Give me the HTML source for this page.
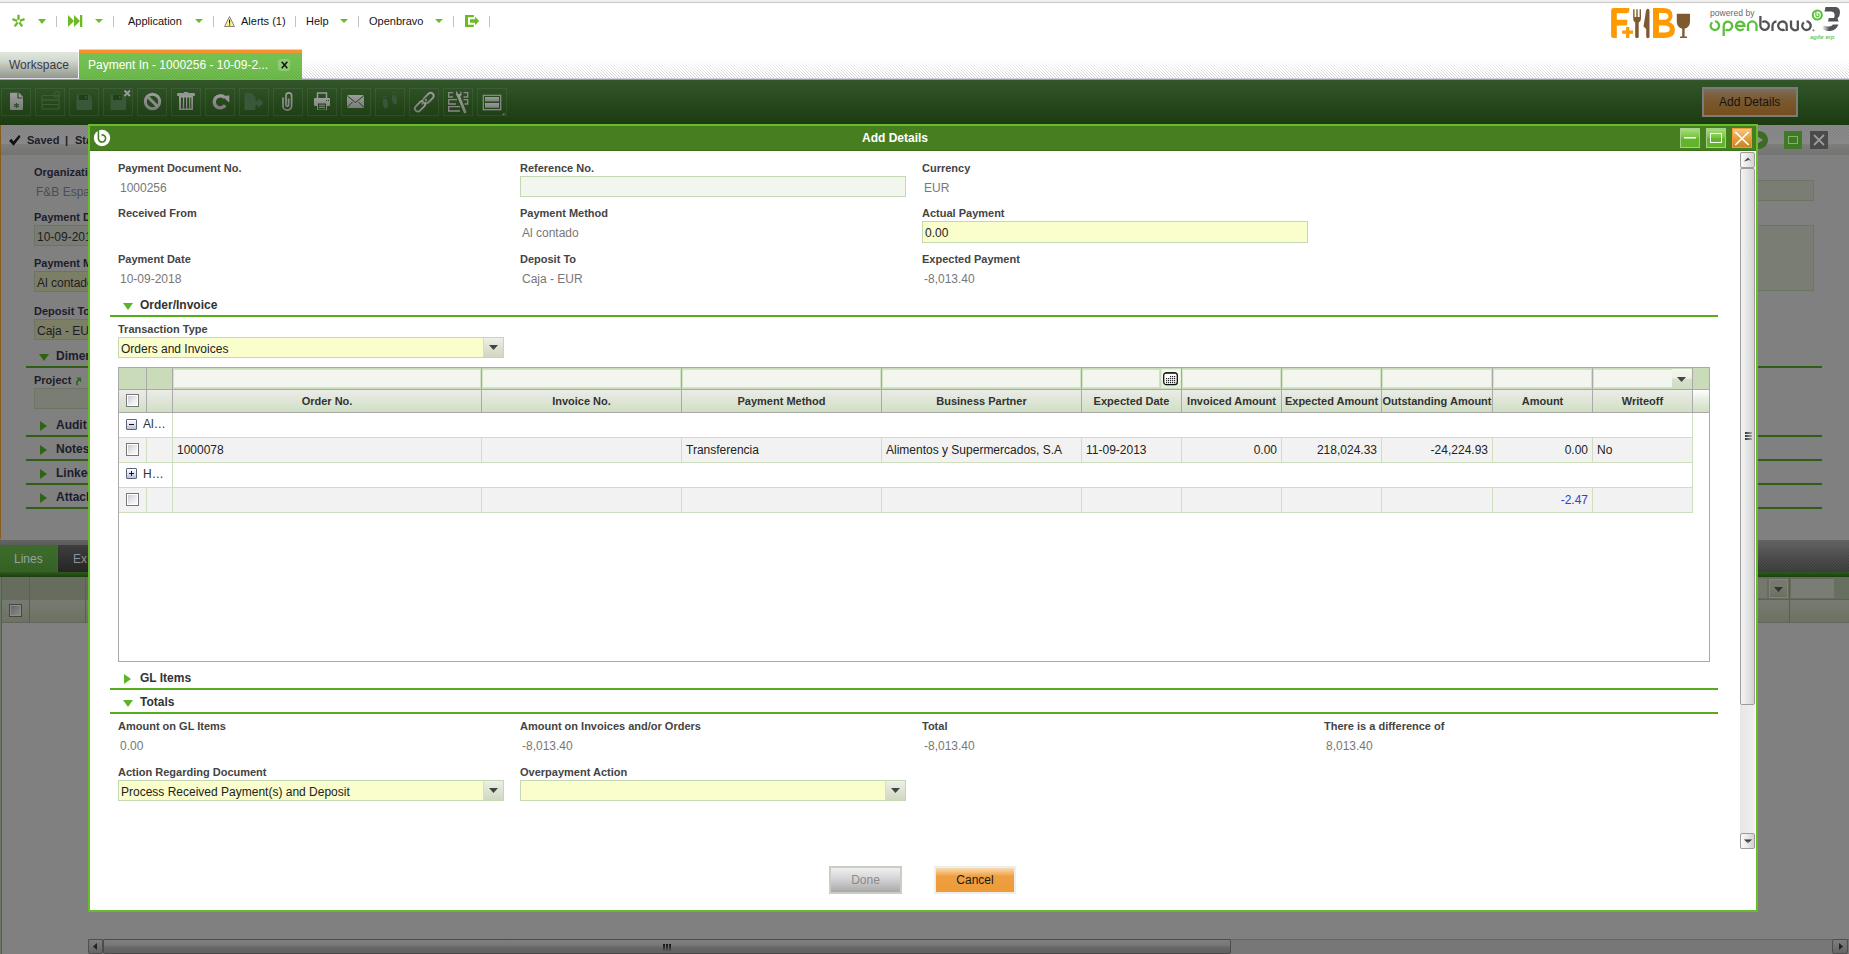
<!DOCTYPE html>
<html><head><meta charset="utf-8">
<style>
*{box-sizing:border-box;margin:0;padding:0}
html,body{width:1849px;height:954px;overflow:hidden;background:#fff;font-family:"Liberation Sans",sans-serif;position:relative}
.a{position:absolute}
.t{position:absolute;white-space:nowrap;line-height:14px}
.b11{font-size:11px;font-weight:bold}
.b12{font-size:12px;font-weight:bold}
.r12{font-size:12px}
.r11{font-size:11px}
svg{position:absolute;overflow:visible}
</style></head><body>

<div class="a" style="left:0px;top:0px;width:1849px;height:2px;background:#efeeec"></div>
<div class="a" style="left:0px;top:2px;width:1849px;height:1px;background:#c9c9c9"></div>
<svg style="left:11px;top:14px" width="15" height="14" viewBox="0 0 15 14"><g stroke="#6cbb25" stroke-width="2.4"><line x1="7.50" y1="5.80" x2="7.50" y2="0.80"/><line x1="8.83" y1="6.77" x2="13.59" y2="5.22"/><line x1="8.32" y1="8.33" x2="11.26" y2="12.38"/><line x1="6.68" y1="8.33" x2="3.74" y2="12.38"/><line x1="6.17" y1="6.77" x2="1.41" y2="5.22"/></g></svg>
<svg style="left:38px;top:19px" width="8" height="5" viewBox="0 0 8 5"><polygon points="0,0 8,0 4.0,5" fill="#6cbb25"/></svg>
<div class="a" style="left:56px;top:16px;width:1px;height:11px;background:#c2c2c2"></div>
<svg style="left:68px;top:15px" width="15" height="12" viewBox="0 0 15 12">
<polygon points="0,0 6,6 0,12" fill="#6cbb25"/><polygon points="6,0 12,6 6,12" fill="#6cbb25"/><rect x="12" y="0" width="2.3" height="12" fill="#6cbb25"/></svg>
<svg style="left:95px;top:19px" width="8" height="4" viewBox="0 0 8 4"><polygon points="0,0 8,0 4.0,4" fill="#6cbb25"/></svg>
<div class="a" style="left:113px;top:16px;width:1px;height:11px;background:#c2c2c2"></div>
<div class="t r11" style="left:128px;top:14px;color:#141420">Application</div>
<svg style="left:195px;top:19px" width="8" height="4" viewBox="0 0 8 4"><polygon points="0,0 8,0 4.0,4" fill="#6cbb25"/></svg>
<div class="a" style="left:213px;top:16px;width:1px;height:11px;background:#c2c2c2"></div>
<svg style="left:224px;top:16px" width="11" height="11" viewBox="0 0 11 11">
<polygon points="5.5,0.5 10.5,10.5 0.5,10.5" fill="#fbf08a" stroke="#777" stroke-width="0.9"/>
<rect x="5" y="3.6" width="1.1" height="4" fill="#222"/><rect x="5" y="8.4" width="1.1" height="1.1" fill="#222"/></svg>
<div class="t r11" style="left:241px;top:14px;color:#141420">Alerts (1)</div>
<div class="a" style="left:295px;top:16px;width:1px;height:11px;background:#c2c2c2"></div>
<div class="t r11" style="left:306px;top:14px;color:#141420">Help</div>
<svg style="left:340px;top:19px" width="8" height="4" viewBox="0 0 8 4"><polygon points="0,0 8,0 4.0,4" fill="#6cbb25"/></svg>
<div class="a" style="left:358px;top:16px;width:1px;height:11px;background:#c2c2c2"></div>
<div class="t r11" style="left:369px;top:14px;color:#141420">Openbravo</div>
<svg style="left:435px;top:19px" width="8" height="4" viewBox="0 0 8 4"><polygon points="0,0 8,0 4.0,4" fill="#6cbb25"/></svg>
<div class="a" style="left:453px;top:16px;width:1px;height:11px;background:#c2c2c2"></div>
<svg style="left:465px;top:15px" width="15" height="12" viewBox="0 0 15 12">
<path d="M0,0 H8.8 V2.2 H3 V9.8 H8.8 V12 H0 Z" fill="#6cbb25"/>
<polygon points="5,4.2 10,4.2 10,1.8 14.2,6 10,10.2 10,7.8 5,7.8" fill="#6cbb25"/></svg>
<div class="a" style="left:489px;top:16px;width:1px;height:11px;background:#c2c2c2"></div>
<svg style="left:1610px;top:7px" width="82" height="32" viewBox="0 0 82 32">
<path d="M1.1,3.5 Q1.1,1.1 3.6,1.1 H19.3 V3.8 Q19.3,6.2 16.8,6.2 H6.8 V12.7 H17.3 V15.9 Q17.3,18.4 14.8,18.4 H6.8 V31 H3.6 Q1.1,31 1.1,28.5 Z" fill="#ff9a00"/>
<path d="M12.2,25.2 H23 M17.7,20 V31" stroke="#ff9a00" stroke-width="3.3" fill="none"/>
<path d="M23.2,2.2 H24.6 V10 H26.3 V2.2 H27.7 V10 H29.6 V2.2 H31 V11.5 Q31,14.5 28.7,15.5 V29.5 Q28.7,31.2 27,31.2 Q25.2,31.2 25.2,29.5 V15.5 Q23.2,14.5 23.2,11.5 Z" fill="#7f5a2f"/>
<path d="M33.5,19.5 L36,3.8 Q36.5,1.8 37.8,1.8 Q39.5,1.8 39.5,4.2 V29.8 Q39.5,31.2 37.8,31.2 Q36.2,31.2 36.2,29.8 V22 Z" fill="#7f5a2f"/>
<path d="M43,1.1 H53 Q62.5,1.1 62.5,8.5 Q62.5,12.5 59,15 Q64.9,17 64.9,23 Q64.9,31 54,31 H43 Z M49,6 V12.7 H54 Q58.4,12.7 58.4,9.3 Q58.4,6 54,6 Z M49,18.4 V25.4 H54.5 Q59.8,25.4 59.8,21.9 Q59.8,18.4 54.5,18.4 Z" fill="#ff9a00" fill-rule="evenodd"/>
<path d="M66.8,6.8 H80 V14.5 Q80,20.5 74.6,21.7 V29.5 H77 V31 H70 V29.5 H72.2 V21.7 Q66.8,20.5 66.8,14.5 Z" fill="#7f5a2f"/>
</svg>
<svg style="left:0;top:0" width="1849" height="45" viewBox="0 0 1849 45">
<text x="1710" y="15.6" font-family="Liberation Sans" font-size="8.6" fill="#6a6a6a" textLength="44.5" lengthAdjust="spacingAndGlyphs">powered by</text>
<g fill="none" stroke="#5cbf3c" stroke-width="2.3">
<path d="M1712.3,22.3 A4.25,4.25 0 1 0 1714.9,21.45"/>
<path d="M1723.7,36 V25.7 A4.25,4.25 0 1 1 1725.6,29.5"/>
<path d="M1736.1,25.8 H1744.5 A4.25,4.25 0 1 0 1743.6,28.6"/>
<path d="M1748,31 V25.7 A4.25,4.25 0 0 1 1756.5,25.7 V31"/>
</g>
<g fill="none" stroke="#525356" stroke-width="2.3">
<path d="M1760.4,16 V25.7 A4.25,4.25 0 1 0 1762.3,22.1"/>
<path d="M1772.5,31 V25.7 A4.25,4.25 0 0 1 1776.5,21.5"/>
<path d="M1786.7,31 V25.7 A4.25,4.25 0 1 0 1784.6,29.4"/>
<path d="M1791,20.4 V26.5 A4.25,4.25 0 0 0 1797.8,29.4 V20.4" />
<path d="M1803.9,22.3 A4.25,4.25 0 1 0 1806.5,21.45"/>
</g>
<circle cx="1813.5" cy="30.3" r="1.1" fill="#888"/>
<circle cx="1817.3" cy="15" r="4.5" fill="none" stroke="#5cbf3c" stroke-width="2.1"/>
<path d="M1815.9,11.2 V15.3 A1.6,1.6 0 1 0 1817.5,13.7" fill="none" stroke="#5cbf3c" stroke-width="1.2"/>
<defs><linearGradient id="g3" x1="0" y1="0" x2="1" y2="0"><stop offset="0" stop-color="#fff"/><stop offset="0.45" stop-color="#525356"/></linearGradient></defs>
<path d="M1825.5,7 H1835 Q1840,7 1840,12.5 Q1840,16 1837.5,18.5 L1838.6,21.5 H1828 L1828.8,18 H1834 Q1835,16 1834.5,14 Q1834,11.5 1831.5,11.5 H1824.5 Z" fill="#525356"/>
<path d="M1822,28.2 Q1824,31 1830,31 Q1836,31 1838.5,24.5 H1833 Q1831.5,26.5 1829,26.5 Q1826,26.5 1823.5,25.5 Z" fill="url(#g3)"/>
<text x="1810" y="38.5" font-family="Liberation Sans" font-size="6" font-style="italic" font-weight="bold" fill="#6fc95a" textLength="24.5" lengthAdjust="spacingAndGlyphs">agile erp</text>
</svg>
<div class="a" style="left:302px;top:49px;width:1547px;height:30px;background:#fff"></div>
<svg style="left:302px;top:58px" width="1547" height="20"><defs><pattern id="hp1" x="1" y="2" width="3" height="3" patternUnits="userSpaceOnUse"><rect x="0" y="0" width="1" height="1" fill="#c4c4c4"/><rect x="1" y="1" width="1" height="1" fill="#c4c4c4"/><rect x="2" y="2" width="1" height="1" fill="#c4c4c4"/></pattern></defs><rect width="1547" height="20" fill="url(#hp1)" opacity="1.0"/><rect width="1547" height="20" fill="url(#oghp1)"/><defs><linearGradient id="oghp1" x1="0" y1="0" x2="0" y2="1"><stop offset="0" stop-color="#fff" stop-opacity="1"/><stop offset="0.25" stop-color="#fff" stop-opacity="0.85"/><stop offset="1" stop-color="#fff" stop-opacity="0.15"/></linearGradient></defs></svg>
<div class="a" style="left:302px;top:78px;width:1547px;height:1px;background:#d2cde0"></div>
<div class="a" style="left:0px;top:52px;width:79px;height:27px;background:linear-gradient(#e0e6dc,#d3dad0 30%,#92968d);border-right:1px solid #f2f2f2;border-bottom:1px solid #dcdce4"></div>
<div class="t r12" style="left:9px;top:58px;color:#3a3a48">Workspace</div>
<div class="a" style="left:79px;top:49px;width:223px;height:1px;background:#fbcf9f"></div>
<div class="a" style="left:79px;top:50px;width:223px;height:3px;background:#f7932f"></div>
<div class="a" style="left:79px;top:53px;width:223px;height:26px;background:linear-gradient(#6cc04f,#77c255 20%,#6cb648 100%)"></div>
<svg style="left:79px;top:53px" width="223" height="26"><defs><pattern id="hp2" x="2" y="1" width="3" height="3" patternUnits="userSpaceOnUse"><rect x="0" y="0" width="1" height="1" fill="#4f9a35"/><rect x="1" y="1" width="1" height="1" fill="#4f9a35"/><rect x="2" y="2" width="1" height="1" fill="#4f9a35"/></pattern></defs><rect width="223" height="26" fill="url(#hp2)" opacity="1.0"/><rect width="223" height="26" fill="url(#oghp2)"/><defs><linearGradient id="oghp2" x1="0" y1="0" x2="0" y2="1"><stop offset="0" stop-color="#74c153" stop-opacity="1"/><stop offset="0.3" stop-color="#74c153" stop-opacity="0.9"/><stop offset="1" stop-color="#74c153" stop-opacity="0.4"/></linearGradient></defs></svg>
<div class="t r12" style="left:88px;top:58px;color:#fff">Payment In - 1000256 - 10-09-2...</div>
<div class="a" style="left:278px;top:59px;width:12px;height:12px;background:rgba(255,255,255,0.22);border-radius:3px"></div>
<svg style="left:281px;top:61px" width="7" height="8" viewBox="0 0 7 8"><path d="M0.7,0.8 L6.3,7.2 M6.3,0.8 L0.7,7.2" stroke="#111" stroke-width="1.5"/></svg>
<div class="a" style="left:0px;top:79px;width:1849px;height:1px;background:#6cc232"></div>
<div class="a" style="left:0px;top:80px;width:1849px;height:874px;background:#808080"></div>
<div class="a" style="left:0px;top:80px;width:1849px;height:45px;background:linear-gradient(#32562a,#1b3a10)"></div>
<div class="a" style="left:1px;top:88px;width:30px;height:28px;border:1px solid rgba(255,255,255,0.07)"></div>
<div class="a" style="left:35px;top:88px;width:30px;height:28px;border:1px solid rgba(255,255,255,0.07)"></div>
<div class="a" style="left:69px;top:88px;width:30px;height:28px;border:1px solid rgba(255,255,255,0.07)"></div>
<div class="a" style="left:103px;top:88px;width:30px;height:28px;border:1px solid rgba(255,255,255,0.07)"></div>
<div class="a" style="left:137px;top:88px;width:30px;height:28px;border:1px solid rgba(255,255,255,0.07)"></div>
<div class="a" style="left:171px;top:88px;width:30px;height:28px;border:1px solid rgba(255,255,255,0.07)"></div>
<div class="a" style="left:205px;top:88px;width:30px;height:28px;border:1px solid rgba(255,255,255,0.07)"></div>
<div class="a" style="left:239px;top:88px;width:30px;height:28px;border:1px solid rgba(255,255,255,0.07)"></div>
<div class="a" style="left:273px;top:88px;width:30px;height:28px;border:1px solid rgba(255,255,255,0.07)"></div>
<div class="a" style="left:307px;top:88px;width:30px;height:28px;border:1px solid rgba(255,255,255,0.07)"></div>
<div class="a" style="left:341px;top:88px;width:30px;height:28px;border:1px solid rgba(255,255,255,0.07)"></div>
<div class="a" style="left:375px;top:88px;width:30px;height:28px;border:1px solid rgba(255,255,255,0.07)"></div>
<div class="a" style="left:409px;top:88px;width:30px;height:28px;border:1px solid rgba(255,255,255,0.07)"></div>
<div class="a" style="left:443px;top:88px;width:30px;height:28px;border:1px solid rgba(255,255,255,0.07)"></div>
<div class="a" style="left:477px;top:88px;width:30px;height:28px;border:1px solid rgba(255,255,255,0.07)"></div>
<svg style="left:0;top:0" width="0" height="0"><defs><linearGradient id="icg" x1="0" y1="0" x2="0" y2="1"><stop offset="0" stop-color="#9c9c9c"/><stop offset="1" stop-color="#7c7c7c"/></linearGradient></defs></svg>
<svg style="left:1px;top:88px" width="30" height="28" viewBox="0 0 30 28"><path d="M9.5,4.7 H18 L22,8.7 V21.2 Q22,22 21,22 H10 Q9,22 9,21 V5.5 Q9,4.7 9.5,4.7 Z" fill="url(#icg)"/><path d="M17,5 V10 H21.5" stroke="#2a4d20" stroke-width="1.2" fill="none"/><g stroke="#2a4d20" stroke-width="1.1"><line x1="15.5" y1="15" x2="15.5" y2="20"/><line x1="13" y1="16.2" x2="18" y2="18.8"/><line x1="13" y1="18.8" x2="18" y2="16.2"/></g></svg>
<svg style="left:35px;top:88px" width="30" height="28" viewBox="0 0 30 28"><g stroke="#3b5e33" stroke-width="1.2" fill="none"><rect x="7" y="7.5" width="17" height="4.5" rx="1"/><rect x="7" y="12" width="17" height="4.5" rx="1"/><rect x="7" y="16.5" width="17" height="4.5" rx="1"/><circle cx="22" cy="6.5" r="2.8"/></g></svg>
<svg style="left:69px;top:88px" width="30" height="28" viewBox="0 0 30 28"><path d="M7.5,6.5 H20 L23,9.5 V21 Q23,22 22,22 H8.5 Q7.5,22 7.5,21 Z" fill="#38583a"/><rect x="10" y="7" width="9" height="5" fill="#213f17"/><rect x="16" y="8" width="1.5" height="2.5" fill="#38583a"/></svg>
<svg style="left:103px;top:88px" width="30" height="28" viewBox="0 0 30 28"><path d="M7.5,6.5 H20 L23,9.5 V21 Q23,22 22,22 H8.5 Q7.5,22 7.5,21 Z" fill="#38583a"/><rect x="10" y="7" width="9" height="5" fill="#213f17"/><rect x="16" y="8" width="1.5" height="2.5" fill="#38583a"/><path d="M21.5,2.5 L27,8 M27,2.5 L21.5,8" stroke="#9a9a9a" stroke-width="2"/></svg>
<svg style="left:137px;top:88px" width="30" height="28" viewBox="0 0 30 28"><circle cx="15.5" cy="13.5" r="7.2" stroke="url(#icg)" stroke-width="3" fill="none"/><line x1="10.5" y1="8.5" x2="20.5" y2="18.5" stroke="#8c8c8c" stroke-width="3"/></svg>
<svg style="left:171px;top:88px" width="30" height="28" viewBox="0 0 30 28"><rect x="6" y="5" width="18" height="3" rx="1" fill="#959595"/><rect x="13" y="4" width="4" height="2" fill="#959595"/><path d="M8,8 H22 V22 H8 Z" fill="url(#icg)"/><g fill="#234518"><rect x="10" y="9.5" width="1.8" height="11"/><rect x="13.2" y="9.5" width="1.8" height="11"/><rect x="16.3" y="9.5" width="1.8" height="11"/><rect x="19.3" y="9.5" width="1" height="11"/></g></svg>
<svg style="left:205px;top:88px" width="30" height="28" viewBox="0 0 30 28"><path d="M19.5,9.6 A6,6 0 1 0 20.2,17.2" stroke="url(#icg)" stroke-width="3.4" fill="none"/><polygon points="16.5,8 24.3,7.5 24.3,14.5" fill="#959595"/></svg>
<svg style="left:239px;top:88px" width="30" height="28" viewBox="0 0 30 28"><path d="M5.5,5 H12.5 L16.5,9 V22 H5.5 Z" fill="#38583a"/><polygon points="13,13 19,13 19,10 24.5,15 19,20 19,17 13,17" fill="#38583a"/></svg>
<svg style="left:273px;top:88px" width="30" height="28" viewBox="0 0 30 28"><path d="M10,9.5 V18.3 A4.3,3.8 0 0 0 18.6,18.3 V7.6 A2.8,2.8 0 0 0 13,7.6 V17 A1.3,1.3 0 0 0 15.6,17 V10.5" stroke="url(#icg)" stroke-width="1.7" fill="none"/></svg>
<svg style="left:307px;top:88px" width="30" height="28" viewBox="0 0 30 28"><rect x="10.5" y="5" width="9" height="6" fill="none" stroke="#999" stroke-width="1.5"/><path d="M7,11 Q7,10 8,10 H22 Q23,10 23,11 V17 Q23,18 22,18 H20 V22 H10 V18 H8 Q7,18 7,17 Z" fill="url(#icg)"/><rect x="11" y="15.5" width="8" height="6" fill="#224519"/><rect x="12" y="16.7" width="6" height="1" fill="#8c8c8c"/><rect x="12" y="18.8" width="6" height="1" fill="#8c8c8c"/><rect x="19" y="12" width="1" height="1" fill="#224519"/><rect x="21" y="12" width="1" height="1" fill="#224519"/></svg>
<svg style="left:341px;top:88px" width="30" height="28" viewBox="0 0 30 28"><rect x="6" y="7" width="17" height="13" rx="1.5" fill="url(#icg)"/><path d="M6.5,8 L14.5,14.5 L22.5,8 M6.5,19 L11.5,14 M22.5,19 L17.5,14" stroke="#234518" stroke-width="1" fill="none"/></svg>
<svg style="left:375px;top:88px" width="30" height="28" viewBox="0 0 30 28"><g fill="#37573a"><ellipse cx="10.3" cy="15.5" rx="2.5" ry="5" transform="rotate(-8 10.3 15.5)"/><ellipse cx="19.5" cy="11.5" rx="2.5" ry="5" transform="rotate(-8 19.5 11.5)"/><circle cx="8.3" cy="9" r="0.8"/><circle cx="9.9" cy="8.3" r="0.8"/><circle cx="11.5" cy="8.5" r="0.7"/><circle cx="17.5" cy="5" r="0.8"/><circle cx="19.1" cy="4.3" r="0.8"/><circle cx="20.7" cy="4.5" r="0.7"/><circle cx="22" cy="5.5" r="0.6"/></g></svg>
<svg style="left:409px;top:88px" width="30" height="28" viewBox="0 0 30 28"><g stroke="url(#icg)" stroke-width="1.8" fill="none"><rect x="16.5" y="4" width="6" height="12" rx="3" transform="rotate(45 19.5 10)"/><rect x="8" y="12.3" width="6" height="12" rx="3" transform="rotate(45 11 18.3)"/><line x1="12.8" y1="16.3" x2="17.7" y2="11.4"/></g><g stroke="#244619" stroke-width="1.6"><line x1="14.6" y1="12" x2="16.2" y2="13.6"/></g></svg>
<svg style="left:443px;top:88px" width="30" height="28" viewBox="0 0 30 28"><g fill="none" stroke="#8a8a8a" stroke-width="1.3"><path d="M10,4.7 H5.7 V9 H10"/><path d="M20.5,4.7 H24.7 V9 H20.5"/><path d="M14,11.7 H5.7 V16 H13"/><path d="M20.5,11.7 H24.7 V16 H21.5"/><path d="M17,18.7 H5.7 V23 H17"/></g><line x1="15.5" y1="8" x2="22" y2="24" stroke="url(#icg)" stroke-width="2.8" stroke-linecap="round"/><path d="M13.6,2.8 Q12,6.5 14.6,9 Q17.4,10 18.6,6.8 Q19,4.6 17.6,3 L17.2,5.8 L15.2,6.2 Z" fill="#959595"/></svg>
<svg style="left:477px;top:88px" width="30" height="28" viewBox="0 0 30 28"><rect x="6.3" y="7.3" width="17.4" height="14.4" fill="none" stroke="#8f8f8f" stroke-width="1.2"/><rect x="8" y="9" width="14" height="4.5" fill="url(#icg)"/><rect x="8" y="15" width="14" height="4.8" fill="url(#icg)"/><polygon points="27.5,24.5 27.5,27 25,27" fill="#7a7a7a"/></svg>
<div class="a" style="left:1702px;top:87px;width:96px;height:30px;border:2px solid #7b7b7b;background:linear-gradient(#7e6d58 0,#7a5a30 40%,#764d1d 100%)"></div>
<div class="t r12" style="left:1719px;top:95px;color:#151515">Add Details</div>
<div class="a" style="left:0px;top:125px;width:1849px;height:30px;background:linear-gradient(#8b8b8b 0,#898989 45%,#7b7b79 70%,#737471 100%)"></div>
<svg style="left:0px;top:125px" width="1849" height="19"><defs><pattern id="hp3" x="0" y="1" width="3" height="3" patternUnits="userSpaceOnUse"><rect x="0" y="0" width="1" height="1" fill="#7b7b7b"/><rect x="1" y="1" width="1" height="1" fill="#7b7b7b"/><rect x="2" y="2" width="1" height="1" fill="#7b7b7b"/></pattern></defs><rect width="1849" height="19" fill="url(#hp3)" opacity="1.0"/><rect width="1849" height="19" fill="url(#oghp3)"/><defs><linearGradient id="oghp3" x1="0" y1="0" x2="0" y2="1"><stop offset="0" stop-color="#8b8b8b" stop-opacity="0"/><stop offset="0.5" stop-color="#8a8a8a" stop-opacity="0.3"/><stop offset="1" stop-color="#898989" stop-opacity="1"/></linearGradient></defs></svg>
<div class="a" style="left:0px;top:125px;width:1px;height:414px;background:#8b5a1f"></div>
<svg style="left:9px;top:134px" width="12" height="12" viewBox="0 0 12 12"><path d="M0.5,6.5 L4.5,10.5 L11,2.5 L10.5,1 L4.3,7.5 L2.5,4.8 Z" fill="#111"/><path d="M1,6.2 L4.5,10 L10.6,2" stroke="#111" stroke-width="2.2" fill="none"/></svg>
<div class="t b11" style="left:27px;top:133px;color:#1c1c2a">Saved</div>
<div class="t b11" style="left:65px;top:133px;color:#1c1c2a">|</div>
<div class="t b11" style="left:75px;top:133px;color:#1c1c2a">Status</div>
<div class="t b11" style="left:34px;top:165px;color:#1c1c2c">Organization</div>
<div class="t r12" style="left:36px;top:185px;color:#4c4c5a">F&amp;B España</div>
<div class="t b11" style="left:34px;top:210px;color:#1c1c2c">Payment Date</div>
<div class="a" style="left:34px;top:225px;width:80px;height:21px;background:#7a7d74;border:1px solid #6b7563"></div>
<div class="t r12" style="left:37px;top:230px;color:#1c1c24">10-09-2018</div>
<div class="t b11" style="left:34px;top:256px;color:#1c1c2c">Payment Method</div>
<div class="a" style="left:34px;top:271px;width:80px;height:21px;background:#7d7e66;border:1px solid #6b7563"></div>
<div class="t r12" style="left:37px;top:276px;color:#1c1c24">Al contado</div>
<div class="t b11" style="left:34px;top:304px;color:#1c1c2c">Deposit To</div>
<div class="a" style="left:34px;top:319px;width:80px;height:21px;background:#7d7e66;border:1px solid #6b7563"></div>
<div class="t r12" style="left:37px;top:324px;color:#1c1c24">Caja - EUR</div>
<svg style="left:39px;top:354px" width="10" height="7" viewBox="0 0 10 7"><polygon points="0,0 10,0 5.0,7" fill="#2e6314"/></svg>
<div class="t b12" style="left:56px;top:349px;color:#1c1c2c">Dimensions</div>
<div class="a" style="left:26px;top:366px;width:1796px;height:2px;background:#2f5e14"></div>
<div class="t b11" style="left:34px;top:373px;color:#1c1c2c">Project</div>
<svg style="left:75px;top:377px" width="7" height="9" viewBox="0 0 7 9"><polygon points="1.2,0.5 6.2,0.5 6.2,5.5" fill="#2f6a1c"/><path d="M4.2,2.6 Q0.8,4.5 2.5,8.3" stroke="#2f6a1c" stroke-width="1.8" fill="none"/></svg>
<div class="a" style="left:34px;top:388px;width:80px;height:21px;background:#7a7d74;border:1px solid #6b7563"></div>
<svg style="left:40px;top:421px" width="7" height="10" viewBox="0 0 7 10"><polygon points="0,0 7,5.0 0,10" fill="#2e6314"/></svg>
<div class="t b12" style="left:56px;top:418px;color:#1c1c2c">Audit</div>
<div class="a" style="left:26px;top:435px;width:1796px;height:2px;background:#2f5e14"></div>
<svg style="left:40px;top:445px" width="7" height="10" viewBox="0 0 7 10"><polygon points="0,0 7,5.0 0,10" fill="#2e6314"/></svg>
<div class="t b12" style="left:56px;top:442px;color:#1c1c2c">Notes</div>
<div class="a" style="left:26px;top:459px;width:1796px;height:2px;background:#2f5e14"></div>
<svg style="left:40px;top:469px" width="7" height="10" viewBox="0 0 7 10"><polygon points="0,0 7,5.0 0,10" fill="#2e6314"/></svg>
<div class="t b12" style="left:56px;top:466px;color:#1c1c2c">Linked Items</div>
<div class="a" style="left:26px;top:483px;width:1796px;height:2px;background:#2f5e14"></div>
<svg style="left:40px;top:493px" width="7" height="10" viewBox="0 0 7 10"><polygon points="0,0 7,5.0 0,10" fill="#2e6314"/></svg>
<div class="t b12" style="left:56px;top:490px;color:#1c1c2c">Attachments</div>
<div class="a" style="left:26px;top:507px;width:1796px;height:2px;background:#2f5e14"></div>
<div class="a" style="left:1740px;top:180px;width:74px;height:21px;background:#7a7d74;border:1px solid #6b7563"></div>
<div class="a" style="left:1740px;top:225px;width:74px;height:66px;background:#7a7d74;border:1px solid #6b7563"></div>
<div class="a" style="left:1750px;top:131px;width:18px;height:18px;background:#3d6b26;border-radius:50%"></div>
<svg style="left:1757px;top:136px" width="7" height="8" viewBox="0 0 7 8"><polygon points="0.5,0.5 6,4 0.5,7.5" fill="#8e8e8e"/></svg>
<div class="a" style="left:1784px;top:131px;width:18px;height:18px;background:#3f7a25"></div>
<div class="a" style="left:1788px;top:136px;width:10px;height:8px;border:1px solid #86b070"></div>
<div class="a" style="left:1810px;top:131px;width:18px;height:18px;background:#4a4a4a"></div>
<svg style="left:1812px;top:133px" width="14" height="14" viewBox="0 0 14 14"><path d="M2,2 L12,12 M12,2 L2,12" stroke="#9a9a9a" stroke-width="1.8"/></svg>
<div class="a" style="left:0px;top:540px;width:1849px;height:32px;background:linear-gradient(#626262 0,#5c5c5c 20%,#4c4c4c 60%,#3f3f3f 100%)"></div>
<svg style="left:0px;top:548px" width="1849" height="24"><defs><pattern id="hp4" x="0" y="1" width="3" height="3" patternUnits="userSpaceOnUse"><rect x="0" y="0" width="1" height="1" fill="#383838"/><rect x="1" y="1" width="1" height="1" fill="#383838"/><rect x="2" y="2" width="1" height="1" fill="#383838"/></pattern></defs><rect width="1849" height="24" fill="url(#hp4)" opacity="1.0"/><rect width="1849" height="24" fill="url(#oghp4)"/><defs><linearGradient id="oghp4" x1="0" y1="0" x2="0" y2="1"><stop offset="0" stop-color="#585858" stop-opacity="1"/><stop offset="0.4" stop-color="#505050" stop-opacity="0.6"/><stop offset="1" stop-color="#444" stop-opacity="0"/></linearGradient></defs></svg>
<div class="a" style="left:0px;top:545px;width:57px;height:27px;background:linear-gradient(#3d6b2b,#386526)"></div>
<svg style="left:0px;top:545px" width="57" height="27"><defs><pattern id="hp5" x="0" y="1" width="3" height="3" patternUnits="userSpaceOnUse"><rect x="0" y="0" width="1" height="1" fill="#2c5420"/><rect x="1" y="1" width="1" height="1" fill="#2c5420"/><rect x="2" y="2" width="1" height="1" fill="#2c5420"/></pattern></defs><rect width="57" height="27" fill="url(#hp5)" opacity="1.0"/><rect width="57" height="27" fill="url(#oghp5)"/><defs><linearGradient id="oghp5" x1="0" y1="0" x2="0" y2="1"><stop offset="0" stop-color="#3d6b2b" stop-opacity="1"/><stop offset="0.35" stop-color="#3d6b2b" stop-opacity="0.8"/><stop offset="1" stop-color="#3a6828" stop-opacity="0.1"/></linearGradient></defs></svg>
<div class="t r12" style="left:14px;top:552px;color:#9aa2a6">Lines</div>
<div class="a" style="left:57px;top:545px;width:31px;height:27px;background:linear-gradient(#3e3e3e,#252525);border-left:1px solid #555"></div>
<div class="t r12" style="left:73px;top:552px;color:#8e929a">Ex</div>
<div class="a" style="left:0px;top:572px;width:1849px;height:5px;background:linear-gradient(#2e5a1c,#1c3e0f)"></div>
<div class="a" style="left:0px;top:577px;width:1849px;height:23px;background:#666d5f"></div>
<div class="a" style="left:0px;top:600px;width:1849px;height:23px;background:linear-gradient(#777a72,#6b735f)"></div>
<div class="a" style="left:0px;top:622px;width:1849px;height:1px;background:#636363"></div>
<div class="a" style="left:1px;top:577px;width:1px;height:46px;background:#5c5c5c"></div>
<div class="a" style="left:29px;top:577px;width:1px;height:46px;background:#5c5c5c"></div>
<div class="a" style="left:85px;top:577px;width:1px;height:46px;background:#5c5c5c"></div>
<div class="a" style="left:9px;top:604px;width:13px;height:13px;border:1px solid #454545;background:#8c8c8c"></div>
<div class="a" style="left:11px;top:606px;width:9px;height:9px;background:linear-gradient(135deg,#656565,#8a8a8a)"></div>
<div class="a" style="left:0px;top:577px;width:1px;height:377px;background:#6a7565"></div>
<div class="a" style="left:1px;top:577px;width:1px;height:377px;background:#5a5a5a"></div>
<div class="a" style="left:1758px;top:579px;width:9px;height:19px;background:#74786e"></div>
<div class="a" style="left:1769px;top:579px;width:19px;height:19px;background:linear-gradient(#77796f 40%,#6a705e);border:1px solid #80857a"></div>
<div class="a" style="left:1758px;top:599px;width:91px;height:1px;background:#5e5e5e"></div>
<div class="a" style="left:1834px;top:579px;width:15px;height:19px;background:#67705f"></div>
<svg style="left:1774px;top:587px" width="9" height="5" viewBox="0 0 9 5"><polygon points="0,0 9,0 4.5,5" fill="#333"/></svg>
<div class="a" style="left:1789px;top:577px;width:1px;height:46px;background:#5c5c5c"></div>
<div class="a" style="left:1791px;top:579px;width:43px;height:19px;background:#7a7d74"></div>
<div class="a" style="left:88px;top:939px;width:1761px;height:15px;background:#777;border-top:1px solid #666"></div>
<div class="a" style="left:88px;top:939px;width:15px;height:15px;background:linear-gradient(#7e7e7e,#656565);border:1px solid #4f4f4f;border-radius:2px"></div>
<svg style="left:92px;top:943px" width="6" height="7" viewBox="0 0 6 7"><polygon points="5,0 5,7 1,3.5" fill="#222"/></svg>
<div class="a" style="left:103px;top:939px;width:1128px;height:15px;background:linear-gradient(#808080,#777 40%,#666 60%,#616161);border:1px solid #4a4a4a;border-radius:2px"></div>
<div class="a" style="left:663px;top:944px;width:2px;height:7px;background:linear-gradient(#111,#555)"></div>
<div class="a" style="left:666px;top:944px;width:2px;height:7px;background:linear-gradient(#111,#555)"></div>
<div class="a" style="left:669px;top:944px;width:2px;height:7px;background:linear-gradient(#111,#555)"></div>
<div class="a" style="left:1832px;top:939px;width:16px;height:15px;background:linear-gradient(#7e7e7e,#656565);border:1px solid #4f4f4f;border-radius:2px"></div>
<svg style="left:1838px;top:943px" width="6" height="7" viewBox="0 0 6 7"><polygon points="1,0 5,3.5 1,7" fill="#222"/></svg>
<div class="a" style="left:88px;top:124px;width:1670px;height:788px;background:#fff;border:2px solid #66bd29"></div>
<div class="a" style="left:90px;top:126px;width:1666px;height:25px;background:#477f20;border-bottom:1px solid #3d7119"></div>
<svg style="left:93px;top:129px" width="18" height="18" viewBox="0 0 18 18">
<circle cx="9" cy="9" r="8.2" fill="#fff"/>
<path d="M5.4,0 V9.5 A3.6,3.6 0 1 0 8.6,5.9" stroke="#477f20" stroke-width="1.6" fill="none"/></svg>
<div class="t b12" style="left:862px;top:131px;color:#fff">Add Details</div>
<div class="a" style="left:1680px;top:128px;width:20px;height:20px;border:1px solid #a6cf8c;background:linear-gradient(#a6dd7c 0,#79c445 45%,#62b52b 55%,#62b52b)"></div>
<div class="a" style="left:1684px;top:137px;width:12px;height:1px;background:#fff"></div>
<div class="a" style="left:1684px;top:138px;width:12px;height:1px;background:rgba(255,255,255,0.5)"></div>
<div class="a" style="left:1706px;top:128px;width:20px;height:20px;border:1px solid #a6cf8c;background:linear-gradient(#a6dd7c 0,#79c445 45%,#62b52b 55%,#62b52b)"></div>
<div class="a" style="left:1710px;top:133px;width:12px;height:10px;border:1px solid #f4fbef"></div>
<div class="a" style="left:1732px;top:128px;width:20px;height:20px;border:1px solid #f39a35;background:linear-gradient(#f0c98a 0,#e8a442 45%,#c9831f 100%)"></div>
<svg style="left:1734px;top:130.5px" width="16" height="15" viewBox="0 0 16 15"><path d="M1.3,1 L14.7,14 M14.7,1 L1.3,14" stroke="#fff" stroke-width="1.7"/></svg>
<div class="a" style="left:1740px;top:152px;width:15px;height:697px;background:linear-gradient(90deg,#e6e6e6,#f0f0f0)"></div>
<div class="a" style="left:1740px;top:152px;width:15px;height:16px;border:1px solid #9c9c9c;border-radius:2px;background:linear-gradient(90deg,#fafafa 0,#e8e8e8 50%,#d2d2d2 100%)"></div>
<svg style="left:1744px;top:157px" width="8" height="5" viewBox="0 0 8 5"><defs><linearGradient id="sau" x1="0" y1="0" x2="1" y2="0"><stop offset="0" stop-color="#222"/><stop offset="0.6" stop-color="#555"/><stop offset="1" stop-color="#bbb"/></linearGradient></defs><polygon points="0,4.5 4,0.5 8,4.5 5,3 " fill="url(#sau)"/></svg>
<div class="a" style="left:1740px;top:168px;width:15px;height:537px;border:1px solid #9c9c9c;border-radius:2px;background:linear-gradient(90deg,#f4f4f4 0,#e6e6e6 45%,#d2d2d2 100%)"></div>
<div class="a" style="left:1745px;top:432px;width:7px;height:2px;background:linear-gradient(90deg,#333,#aaa)"></div>
<div class="a" style="left:1745px;top:435px;width:7px;height:2px;background:linear-gradient(90deg,#333,#aaa)"></div>
<div class="a" style="left:1745px;top:438px;width:7px;height:2px;background:linear-gradient(90deg,#333,#aaa)"></div>
<div class="a" style="left:1740px;top:833px;width:15px;height:16px;border:1px solid #9c9c9c;border-radius:2px;background:linear-gradient(90deg,#fafafa 0,#e8e8e8 50%,#d2d2d2 100%)"></div>
<svg style="left:1744px;top:839px" width="8" height="5" viewBox="0 0 8 5"><defs><linearGradient id="sad" x1="0" y1="0" x2="0" y2="1"><stop offset="0" stop-color="#222"/><stop offset="1" stop-color="#999"/></linearGradient></defs><polygon points="0,0.5 8,0.5 4,4.5" fill="url(#sad)"/></svg>
<div class="t b11" style="left:118px;top:161px;color:#444">Payment Document No.</div>
<div class="t r12" style="left:120px;top:181px;color:#777">1000256</div>
<div class="t b11" style="left:520px;top:161px;color:#444">Reference No.</div>
<div class="a" style="left:520px;top:176px;width:386px;height:21px;background:#f3f6ee;border:1px solid #c3d8b3"></div>
<div class="t b11" style="left:922px;top:161px;color:#444">Currency</div>
<div class="t r12" style="left:924px;top:181px;color:#777">EUR</div>
<div class="t b11" style="left:118px;top:206px;color:#444">Received From</div>
<div class="t b11" style="left:520px;top:206px;color:#444">Payment Method</div>
<div class="t r12" style="left:522px;top:226px;color:#777">Al contado</div>
<div class="t b11" style="left:922px;top:206px;color:#444">Actual Payment</div>
<div class="a" style="left:922px;top:221px;width:386px;height:22px;background:#fafdcc;border:1px solid #c3d8b3"></div>
<div class="t r12" style="left:925px;top:226px;color:#222">0.00</div>
<div class="t b11" style="left:118px;top:252px;color:#444">Payment Date</div>
<div class="t r12" style="left:120px;top:272px;color:#777">10-09-2018</div>
<div class="t b11" style="left:520px;top:252px;color:#444">Deposit To</div>
<div class="t r12" style="left:522px;top:272px;color:#777">Caja - EUR</div>
<div class="t b11" style="left:922px;top:252px;color:#444">Expected Payment</div>
<div class="t r12" style="left:924px;top:272px;color:#777">-8,013.40</div>
<svg style="left:123px;top:303px" width="10" height="7" viewBox="0 0 10 7"><polygon points="0,0 10,0 5.0,7" fill="#5cb42a"/></svg>
<div class="t b12" style="left:140px;top:298px;color:#333">Order/Invoice</div>
<div class="a" style="left:110px;top:315px;width:1608px;height:2px;background:#57ac1c"></div>
<div class="t b11" style="left:118px;top:322px;color:#444">Transaction Type</div>
<div class="a" style="left:118px;top:337px;width:386px;height:21px;background:#fafdcc;border:1px solid #c3d8b3"></div>
<div class="a" style="left:483px;top:338px;width:20px;height:19px;background:linear-gradient(#eef0e6 0,#dde3d2 50%,#cfd8c2 100%);border-left:1px solid #d6dfcc"></div>
<svg style="left:489px;top:345px" width="9" height="5" viewBox="0 0 9 5"><polygon points="0,0 9,0 4.5,5" fill="#444"/></svg>
<div class="t r12" style="left:121px;top:342px;color:#222">Orders and Invoices</div>
<div class="a" style="left:118px;top:367px;width:1592px;height:295px;border:1px solid #a9a9a9;background:#fff"></div>
<div class="a" style="left:119px;top:368px;width:1590px;height:21px;background:#c9dbb9"></div>
<div class="a" style="left:119px;top:390px;width:1574px;height:22px;background:linear-gradient(#ebece8 0,#e2e7dc 35%,#d0dfc4 100%)"></div>
<div class="a" style="left:1693px;top:390px;width:16px;height:22px;background:linear-gradient(#fff 0,#e8eee2 40%,#cfdfc2 100%)"></div>
<div class="a" style="left:119px;top:389px;width:1590px;height:1px;background:#a9a9a9"></div>
<div class="a" style="left:119px;top:412px;width:1590px;height:1px;background:#a9a9a9"></div>
<div class="a" style="left:146px;top:368px;width:1px;height:45px;background:#a9a9a9"></div>
<div class="a" style="left:172px;top:368px;width:1px;height:45px;background:#a9a9a9"></div>
<div class="a" style="left:481px;top:368px;width:1px;height:45px;background:#a9a9a9"></div>
<div class="a" style="left:681px;top:368px;width:1px;height:45px;background:#a9a9a9"></div>
<div class="a" style="left:881px;top:368px;width:1px;height:45px;background:#a9a9a9"></div>
<div class="a" style="left:1081px;top:368px;width:1px;height:45px;background:#a9a9a9"></div>
<div class="a" style="left:1181px;top:368px;width:1px;height:45px;background:#a9a9a9"></div>
<div class="a" style="left:1281px;top:368px;width:1px;height:45px;background:#a9a9a9"></div>
<div class="a" style="left:1381px;top:368px;width:1px;height:45px;background:#a9a9a9"></div>
<div class="a" style="left:1492px;top:368px;width:1px;height:45px;background:#a9a9a9"></div>
<div class="a" style="left:1592px;top:368px;width:1px;height:45px;background:#a9a9a9"></div>
<div class="a" style="left:1692px;top:368px;width:1px;height:45px;background:#a9a9a9"></div>
<div class="a" style="left:173px;top:369px;width:308px;height:19px;background:#f3f6ee;border:1px solid #d2e2c4"></div>
<div class="a" style="left:482px;top:369px;width:199px;height:19px;background:#f3f6ee;border:1px solid #d2e2c4"></div>
<div class="a" style="left:682px;top:369px;width:199px;height:19px;background:#f3f6ee;border:1px solid #d2e2c4"></div>
<div class="a" style="left:882px;top:369px;width:199px;height:19px;background:#f3f6ee;border:1px solid #d2e2c4"></div>
<div class="a" style="left:1082px;top:369px;width:99px;height:19px;background:#f3f6ee;border:1px solid #d2e2c4"></div>
<div class="a" style="left:1182px;top:369px;width:99px;height:19px;background:#f3f6ee;border:1px solid #d2e2c4"></div>
<div class="a" style="left:1282px;top:369px;width:99px;height:19px;background:#f3f6ee;border:1px solid #d2e2c4"></div>
<div class="a" style="left:1382px;top:369px;width:110px;height:19px;background:#f3f6ee;border:1px solid #d2e2c4"></div>
<div class="a" style="left:1493px;top:369px;width:99px;height:19px;background:#f3f6ee;border:1px solid #d2e2c4"></div>
<div class="a" style="left:1593px;top:369px;width:99px;height:19px;background:#f3f6ee;border:1px solid #d2e2c4"></div>
<div class="a" style="left:1082px;top:369px;width:78px;height:19px;background:#f3f6ee;border:1px solid #d2e2c4"></div>
<div class="a" style="left:1160px;top:369px;width:1px;height:19px;background:#c9dbb9"></div>
<div class="a" style="left:1161px;top:369px;width:20px;height:19px;background:linear-gradient(#f9fbf5 0,#f2f6ea 60%,#e2eAd6 100%);border:1px solid #e4eedb"></div>
<svg style="left:1163px;top:372px" width="15" height="14" viewBox="0 0 15 14"><rect x="0.7" y="0.8" width="13.6" height="11.8" rx="2.6" fill="#fff" stroke="#111" stroke-width="1.3"/><rect x="2.5" y="0.3" width="10" height="1.2" fill="#111"/><rect x="7" y="4" width="1.2" height="1.2" fill="#222"/><rect x="9" y="4" width="1.2" height="1.2" fill="#222"/><rect x="11" y="4" width="1.2" height="1.2" fill="#222"/><rect x="3" y="6" width="1.2" height="1.2" fill="#222"/><rect x="5" y="6" width="1.2" height="1.2" fill="#222"/><rect x="7" y="6" width="1.2" height="1.2" fill="#222"/><rect x="9" y="6" width="1.2" height="1.2" fill="#222"/><rect x="11" y="6" width="1.2" height="1.2" fill="#222"/><rect x="3" y="8" width="1.2" height="1.2" fill="#222"/><rect x="5" y="8" width="1.2" height="1.2" fill="#222"/><rect x="7" y="8" width="1.2" height="1.2" fill="#222"/><rect x="9" y="8" width="1.2" height="1.2" fill="#222"/><rect x="11" y="8" width="1.2" height="1.2" fill="#222"/><rect x="3" y="10" width="1.2" height="1.2" fill="#222"/><rect x="5" y="10" width="1.2" height="1.2" fill="#222"/><rect x="7" y="10" width="1.2" height="1.2" fill="#222"/><rect x="9" y="10" width="1.2" height="1.2" fill="#222"/><rect x="11" y="10" width="1.2" height="1.2" fill="#222"/></svg>
<div class="a" style="left:1672px;top:369px;width:20px;height:19px;background:linear-gradient(#f3f6ee 0,#eef2e6 45%,#d7e1ca 55%,#d2dcc4 100%)"></div>
<svg style="left:1677px;top:377px" width="9" height="5" viewBox="0 0 9 5"><polygon points="0,0 9,0 4.5,5" fill="#444"/></svg>
<div class="a" style="left:126px;top:394px;width:13px;height:13px;border:1px solid #777;background:#fff"></div>
<div class="a" style="left:128px;top:396px;width:9px;height:9px;background:linear-gradient(135deg,#c9ccd4 0,#eceef0 60%,#fafafa 100%)"></div>
<div class="t b11" style="left:173px;top:394px;width:308px;text-align:center;color:#333">Order No.</div>
<div class="t b11" style="left:482px;top:394px;width:199px;text-align:center;color:#333">Invoice No.</div>
<div class="t b11" style="left:682px;top:394px;width:199px;text-align:center;color:#333">Payment Method</div>
<div class="t b11" style="left:882px;top:394px;width:199px;text-align:center;color:#333">Business Partner</div>
<div class="t b11" style="left:1082px;top:394px;width:99px;text-align:center;color:#333">Expected Date</div>
<div class="t b11" style="left:1182px;top:394px;width:99px;text-align:center;color:#333">Invoiced Amount</div>
<div class="t b11" style="left:1282px;top:394px;width:99px;text-align:center;color:#333">Expected Amount</div>
<div class="t b11" style="left:1382px;top:394px;width:110px;text-align:center;color:#333">Outstanding Amount</div>
<div class="t b11" style="left:1493px;top:394px;width:99px;text-align:center;color:#333">Amount</div>
<div class="t b11" style="left:1593px;top:394px;width:99px;text-align:center;color:#333">Writeoff</div>
<div class="a" style="left:119px;top:413px;width:1574px;height:24px;background:#fff"></div>
<div class="a" style="left:172px;top:413px;width:1px;height:24px;background:#cddfbf"></div>
<div class="a" style="left:119px;top:437px;width:1574px;height:1px;background:#cddfbf"></div>
<div class="a" style="left:119px;top:438px;width:1574px;height:24px;background:#f2f2f2"></div>
<div class="a" style="left:146px;top:438px;width:1px;height:24px;background:#cddfbf"></div>
<div class="a" style="left:172px;top:438px;width:1px;height:24px;background:#cddfbf"></div>
<div class="a" style="left:481px;top:438px;width:1px;height:24px;background:#cddfbf"></div>
<div class="a" style="left:681px;top:438px;width:1px;height:24px;background:#cddfbf"></div>
<div class="a" style="left:881px;top:438px;width:1px;height:24px;background:#cddfbf"></div>
<div class="a" style="left:1081px;top:438px;width:1px;height:24px;background:#cddfbf"></div>
<div class="a" style="left:1181px;top:438px;width:1px;height:24px;background:#cddfbf"></div>
<div class="a" style="left:1281px;top:438px;width:1px;height:24px;background:#cddfbf"></div>
<div class="a" style="left:1381px;top:438px;width:1px;height:24px;background:#cddfbf"></div>
<div class="a" style="left:1492px;top:438px;width:1px;height:24px;background:#cddfbf"></div>
<div class="a" style="left:1592px;top:438px;width:1px;height:24px;background:#cddfbf"></div>
<div class="a" style="left:1692px;top:438px;width:1px;height:24px;background:#cddfbf"></div>
<div class="a" style="left:119px;top:462px;width:1574px;height:1px;background:#cddfbf"></div>
<div class="a" style="left:119px;top:463px;width:1574px;height:24px;background:#fff"></div>
<div class="a" style="left:172px;top:463px;width:1px;height:24px;background:#cddfbf"></div>
<div class="a" style="left:119px;top:487px;width:1574px;height:1px;background:#cddfbf"></div>
<div class="a" style="left:119px;top:488px;width:1574px;height:24px;background:#f2f2f2"></div>
<div class="a" style="left:146px;top:488px;width:1px;height:24px;background:#cddfbf"></div>
<div class="a" style="left:172px;top:488px;width:1px;height:24px;background:#cddfbf"></div>
<div class="a" style="left:481px;top:488px;width:1px;height:24px;background:#cddfbf"></div>
<div class="a" style="left:681px;top:488px;width:1px;height:24px;background:#cddfbf"></div>
<div class="a" style="left:881px;top:488px;width:1px;height:24px;background:#cddfbf"></div>
<div class="a" style="left:1081px;top:488px;width:1px;height:24px;background:#cddfbf"></div>
<div class="a" style="left:1181px;top:488px;width:1px;height:24px;background:#cddfbf"></div>
<div class="a" style="left:1281px;top:488px;width:1px;height:24px;background:#cddfbf"></div>
<div class="a" style="left:1381px;top:488px;width:1px;height:24px;background:#cddfbf"></div>
<div class="a" style="left:1492px;top:488px;width:1px;height:24px;background:#cddfbf"></div>
<div class="a" style="left:1592px;top:488px;width:1px;height:24px;background:#cddfbf"></div>
<div class="a" style="left:1692px;top:488px;width:1px;height:24px;background:#cddfbf"></div>
<div class="a" style="left:119px;top:512px;width:1574px;height:1px;background:#cddfbf"></div>
<div class="a" style="left:1692px;top:413px;width:1px;height:100px;background:#cddfbf"></div>
<div class="a" style="left:126px;top:419px;width:11px;height:11px;border:1px solid #5c6580;border-radius:1px;background:linear-gradient(#fff 0,#d8dcec 60%,#b9bfd6 100%)"></div>
<div class="a" style="left:129px;top:424px;width:5px;height:1px;background:#111"></div>
<div class="t r12" style="left:143px;top:417px;color:#333">Al&#8230;</div>
<div class="a" style="left:126px;top:468px;width:11px;height:11px;border:1px solid #5c6580;border-radius:1px;background:linear-gradient(#fff 0,#d8dcec 60%,#b9bfd6 100%)"></div>
<div class="a" style="left:129px;top:473px;width:5px;height:1px;background:#111"></div>
<div class="a" style="left:131px;top:471px;width:1px;height:5px;background:#111"></div>
<div class="t r12" style="left:143px;top:467px;color:#333">H&#8230;</div>
<div class="a" style="left:126px;top:443px;width:13px;height:13px;border:1px solid #777;background:#fff"></div>
<div class="a" style="left:128px;top:445px;width:9px;height:9px;background:linear-gradient(135deg,#c9ccd4 0,#eceef0 60%,#fafafa 100%)"></div>
<div class="a" style="left:126px;top:493px;width:13px;height:13px;border:1px solid #777;background:#fff"></div>
<div class="a" style="left:128px;top:495px;width:9px;height:9px;background:linear-gradient(135deg,#c9ccd4 0,#eceef0 60%,#fafafa 100%)"></div>
<div class="t r12" style="left:177px;top:443px;color:#222">1000078</div>
<div class="t r12" style="left:686px;top:443px;color:#222">Transferencia</div>
<div class="t r12" style="left:886px;top:443px;color:#222">Alimentos y Supermercados, S.A</div>
<div class="t r12" style="left:1086px;top:443px;color:#222">11-09-2013</div>
<div class="t r12" style="left:1127px;top:443px;width:150px;text-align:right;color:#222">0.00</div>
<div class="t r12" style="left:1227px;top:443px;width:150px;text-align:right;color:#222">218,024.33</div>
<div class="t r12" style="left:1338px;top:443px;width:150px;text-align:right;color:#222">-24,224.93</div>
<div class="t r12" style="left:1438px;top:443px;width:150px;text-align:right;color:#222">0.00</div>
<div class="t r12" style="left:1597px;top:443px;color:#222">No</div>
<div class="t r12" style="left:1438px;top:493px;width:150px;text-align:right;color:#3a3ad0">-2.47</div>
<svg style="left:124px;top:674px" width="7" height="10" viewBox="0 0 7 10"><polygon points="0,0 7,5.0 0,10" fill="#5cb42a"/></svg>
<div class="t b12" style="left:140px;top:671px;color:#333">GL Items</div>
<div class="a" style="left:110px;top:688px;width:1608px;height:2px;background:#57ac1c"></div>
<svg style="left:123px;top:700px" width="10" height="7" viewBox="0 0 10 7"><polygon points="0,0 10,0 5.0,7" fill="#5cb42a"/></svg>
<div class="t b12" style="left:140px;top:695px;color:#333">Totals</div>
<div class="a" style="left:110px;top:712px;width:1608px;height:2px;background:#57ac1c"></div>
<div class="t b11" style="left:118px;top:719px;color:#444">Amount on GL Items</div>
<div class="t r12" style="left:120px;top:739px;color:#777">0.00</div>
<div class="t b11" style="left:520px;top:719px;color:#444">Amount on Invoices and/or Orders</div>
<div class="t r12" style="left:522px;top:739px;color:#777">-8,013.40</div>
<div class="t b11" style="left:922px;top:719px;color:#444">Total</div>
<div class="t r12" style="left:924px;top:739px;color:#777">-8,013.40</div>
<div class="t b11" style="left:1324px;top:719px;color:#444">There is a difference of</div>
<div class="t r12" style="left:1326px;top:739px;color:#777">8,013.40</div>
<div class="t b11" style="left:118px;top:765px;color:#444">Action Regarding Document</div>
<div class="a" style="left:118px;top:780px;width:386px;height:21px;background:#fafdcc;border:1px solid #c3d8b3"></div>
<div class="a" style="left:483px;top:781px;width:20px;height:19px;background:linear-gradient(#eef0e6 0,#dde3d2 50%,#cfd8c2 100%);border-left:1px solid #d6dfcc"></div>
<svg style="left:489px;top:788px" width="9" height="5" viewBox="0 0 9 5"><polygon points="0,0 9,0 4.5,5" fill="#444"/></svg>
<div class="t r12" style="left:121px;top:785px;color:#222">Process Received Payment(s) and Deposit</div>
<div class="t b11" style="left:520px;top:765px;color:#444">Overpayment Action</div>
<div class="a" style="left:520px;top:780px;width:386px;height:21px;background:#fafdcc;border:1px solid #c3d8b3"></div>
<div class="a" style="left:885px;top:781px;width:20px;height:19px;background:linear-gradient(#eef0e6 0,#dde3d2 50%,#cfd8c2 100%);border-left:1px solid #d6dfcc"></div>
<svg style="left:891px;top:788px" width="9" height="5" viewBox="0 0 9 5"><polygon points="0,0 9,0 4.5,5" fill="#444"/></svg>
<div class="a" style="left:829px;top:866px;width:73px;height:28px;border:2px solid #c8cec4;background:linear-gradient(#f0f0f0 0,#d4d4d4 45%,#a9a9a9 100%)"></div>
<div class="t r12" style="left:831px;top:873px;width:69px;text-align:center;color:#8a8a8a">Done</div>
<div class="a" style="left:934px;top:866px;width:82px;height:28px;border:2px solid #eeeeee;background:linear-gradient(#f8dcae 0,#ef9f42 35%,#ee9b38 100%)"></div>
<div class="t r12" style="left:936px;top:873px;width:78px;text-align:center;color:#1a1a1a">Cancel</div>
</body></html>
